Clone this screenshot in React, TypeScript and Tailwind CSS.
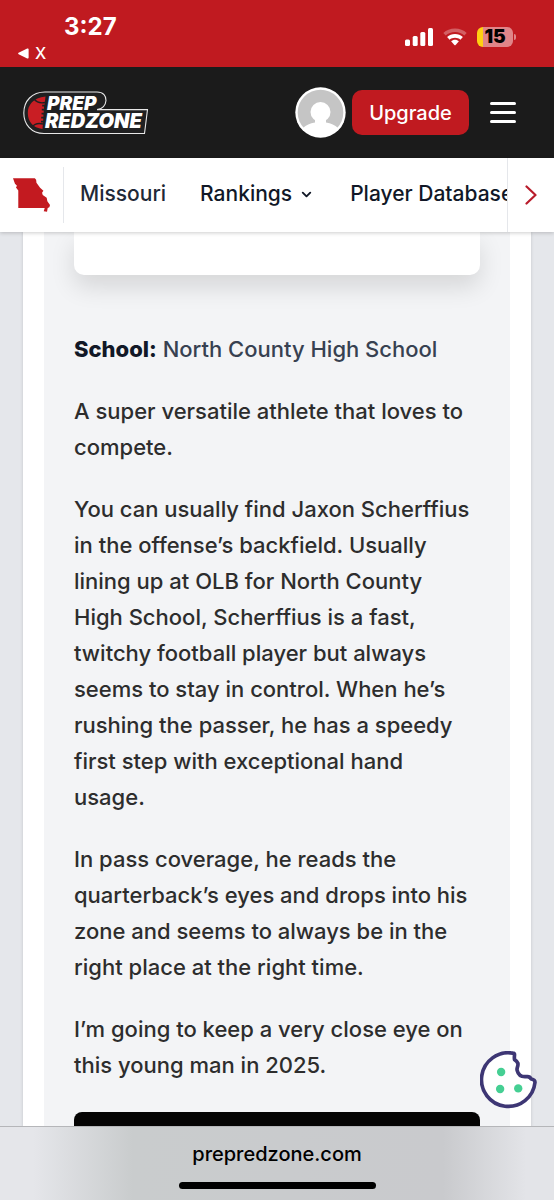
import React from 'react';
import { ChevronDown } from 'lucide-react';

const PARAGRAPHS = [
	'A super versatile athlete that loves to compete.',
	'You can usually find Jaxon Scherffius in the offense’s backfield. Usually lining up at OLB for North County High School, Scherffius is a fast, twitchy football player but always seems to stay in control. When he’s rushing the passer, he has a speedy first step with exceptional hand usage.',
	'In pass coverage, he reads the quarterback’s eyes and drops into his zone and seems to always be in the right place at the right time.',
	'I’m going to keep a very close eye on this young man in 2025.',
];

const SignalIcon = () => (
	<svg width="28" height="18" viewBox="0 0 28 18" fill="#fff" aria-hidden="true">
		<rect x="0" y="11.5" width="5" height="6.5" rx="1.5" />
		<rect x="7.7" y="8" width="5" height="10" rx="1.5" />
		<rect x="15.3" y="4" width="5" height="14" rx="1.5" />
		<rect x="23" y="0" width="5" height="18" rx="1.5" />
	</svg>
);

const WifiIcon = () => (
	<svg width="24" height="18" viewBox="0 0 24 18" aria-hidden="true">
		<path
			d="M12 0.5C16.6 0.5 20.7 2.2 23.7 5L21.3 7.5C18.9 5.3 15.6 4 12 4S5.1 5.3 2.7 7.5L.3 5C3.3 2.2 7.4.5 12 .5Z"
			fill="#fff"
			fillOpacity="0.3"
		/>
		<path
			d="M12 6C15 6 17.8 7.1 19.9 9L17.4 11.7C16 10.5 14.1 9.8 12 9.8S8 10.5 6.6 11.7L4.1 9C6.2 7.1 9 6 12 6Z"
			fill="#fff"
		/>
		<path
			d="M12 11.8C13.5 11.8 14.9 12.4 15.9 13.3L12.6 16.9Q12 17.5 11.4 16.9L8.1 13.3C9.1 12.4 10.5 11.8 12 11.8Z"
			fill="#fff"
		/>
	</svg>
);

const StatusBar = () => (
	<div className="flex h-[67px] shrink-0 items-start justify-between bg-[#c01a20] text-white">
		<div className="flex flex-col pl-[18px] pt-[13px]">
			<span className="pl-[46px] text-[24px] leading-7 font-bold">3:27</span>
			<span className="flex items-center gap-[6px] pt-[2px] text-[16px] leading-5 font-medium">
				<svg width="11" height="11" viewBox="0 0 11 11" fill="#fff" aria-hidden="true">
					<path d="M.6 4.8 9.2.6Q10.6 0 10.6 1.4V9.6Q10.6 11 9.2 10.4L.6 6.2Q-.4 5.5.6 4.8Z" />
				</svg>
				X
			</span>
		</div>
		<div className="flex items-center pr-[38px] pt-[27px]">
			<SignalIcon />
			<span className="px-[10px]">
				<WifiIcon />
			</span>
			<span className="flex h-5 w-9 items-center justify-center rounded-[6px] bg-linear-to-r from-[#ffd012] from-17% to-[#e08588] to-17% text-[19px] leading-5 font-black text-black">
				15
			</span>
			<span className="ml-px h-[6px] w-[2px] rounded-r-full bg-[#e08588]" />
		</div>
	</div>
);

const Logo = () => (
	<svg width="126" height="44" viewBox="0 0 126 44" role="img" aria-label="Prep Redzone">
		<path
			d="M22 1H74C87 1 85 18 74 18.6H124.5L121.5 42.5H21C8 42.5 .8 33 .8 22C.8 10 9 1 22 1Z"
			fill="#202021"
			stroke="#e8e8e8"
			strokeWidth="1.1"
		/>
		<path
			d="M22.5 5.5C10 7 4.8 14 4.8 22C4.8 30.5 10 37 19.5 38L20 31.5H18V29.8H20.2V27.5H18.2V25.8H20.4V23.5H18.5V21.8H20.7V19.5H18.8V17.8H21V15.5H19.2V13.8H21.5Z"
			fill="#c91e24"
		/>
		<path d="M11 8Q15 13 22 11.5M9 36Q13 31 20 33" fill="none" stroke="#202021" strokeWidth="1.4" />
		<g fill="#fff" fontFamily="Inter, sans-serif" fontStyle="italic" fontWeight="900">
			<text x="24" y="19" fontSize="19">PREP</text>
			<text x="22" y="37" fontSize="20">REDZONE</text>
		</g>
	</svg>
);

const Header = () => (
	<header className="flex h-[91px] shrink-0 items-center justify-between bg-[#1b1b1b] pl-[23px] pr-[38px]">
		<a href="#">
			<Logo />
		</a>
		<div className="flex items-center">
			<button type="button" aria-label="Account" className="mr-[6px]">
				<svg width="51" height="51" viewBox="0 0 51 51" aria-hidden="true">
					<circle cx="25.5" cy="25.5" r="25.2" fill="#fff" />
					<circle cx="25.5" cy="25.5" r="22.8" fill="#c5c5c5" />
					<circle cx="25.5" cy="25" r="10" fill="#fff" />
					<path d="M20 31V35.5C15 36.5 11 38 8 41L14 47Q25.5 53 37 47L43 41C40 38 36 36.5 31 35.5V31Z" fill="#fff" />
				</svg>
			</button>
			<button type="button" className="mr-[21px] h-[45px] w-[117px] rounded-[10px] bg-[#c01a20] text-[20px] font-medium text-white">
				Upgrade
			</button>
			<button type="button" aria-label="Menu" className="flex flex-col gap-[6px]">
				<span className="h-[3px] w-[26px] rounded-full bg-white" />
				<span className="h-[3px] w-[26px] rounded-full bg-white" />
				<span className="h-[3px] w-[26px] rounded-full bg-white" />
			</button>
		</div>
	</header>
);

const MissouriIcon = () => (
	<svg width="37" height="34" viewBox="0 0 112 102" fill="#c31a20" aria-hidden="true">
		<path d="M0 0H66L70 5L71 14L82 29L92 38L88 44L90 51L102 59L104 70L112 81L110 88L105 90L103 102L93 100L96 90H16V37L9 28L12 23L6 17Z" />
	</svg>
);

const NavBar = () => (
	<nav className="relative z-10 flex h-[74px] shrink-0 items-center bg-white text-[21px] font-medium text-[#111827] shadow-[0_1px_4px_rgba(0,0,0,0.2)]">
		<a href="#" aria-label="State" className="flex h-14 shrink-0 items-center border-r border-gray-200 px-[13px]">
			<MissouriIcon />
		</a>
		<div className="flex min-w-0 flex-1 items-center overflow-hidden pb-[2px] pl-4 whitespace-nowrap">
			<a href="#" className="mr-[34px] text-[#1f2937]">Missouri</a>
			<button type="button" className="mr-[36px] flex items-center gap-[7px]">
				Rankings
				<ChevronDown size={15} strokeWidth={3} />
			</button>
			<a href="#">Player Database</a>
		</div>
		<button type="button" aria-label="Scroll right" className="flex h-full w-[47px] shrink-0 items-center justify-center border-l border-gray-200 bg-white">
			<svg width="12" height="20" viewBox="0 0 12 20" fill="none" stroke="#b91c2b" strokeWidth="2.2" strokeLinecap="round" strokeLinejoin="round" aria-hidden="true">
				<path d="M1.5 1.5 10.5 10 1.5 18.5" />
			</svg>
		</button>
	</nav>
);

const Article = () => (
	<main className="min-h-0 flex-1 overflow-hidden px-[23px]">
		<article className="bg-white px-[21px] shadow-[0_0_3px_rgba(0,0,0,0.15)]">
			<div className="bg-[#f3f4f6] px-[30px] text-[22px] leading-9 font-medium text-[#2d2d2d]">
				{/* bottom edge of the player card */}
				<div className="h-[43px] rounded-b-[10px] bg-white shadow-[0_12px_24px_rgba(0,0,0,0.12)]" />
				<div className="flex flex-col gap-[26px] pt-14 pr-2 pb-[29px]">
					<p className="text-[#374151]">
						<strong className="font-extrabold text-[#111827]">School:</strong> North County High School
					</p>
					{PARAGRAPHS.map((text) => (
						<p key={text}>{text}</p>
					))}
				</div>
				<div className="h-56 rounded-[8px] bg-[#050404]" />
			</div>
		</article>
	</main>
);

const CookieButton = () => (
	<button type="button" aria-label="Cookie settings" className="fixed right-[17px] bottom-[91px] z-20">
		<svg width="57" height="58" viewBox="0 0 170 172" aria-hidden="true">
			<path
				d="M98 6A80 80 0 1 0 164 93Q164 85 153 83Q148 74 138 76Q116 78 111 58C108 50 115 46 113 36Q110 29 103 25Q102 20 103 11Q103 6 98 6Z"
				fill="#fff"
				stroke="#3d3674"
				strokeWidth="11"
				strokeLinejoin="round"
			/>
			<g fill="#45cf93">
				<circle cx="63" cy="62" r="12.5" />
				<circle cx="60" cy="113" r="12.5" />
				<circle cx="114" cy="111" r="12.5" />
			</g>
		</svg>
	</button>
);

const BrowserBar = () => (
	<footer className="relative z-10 flex h-[74px] shrink-0 flex-col items-center justify-between border-t border-[#b5b6b9] bg-[linear-gradient(to_right,#e5e6ea_6%,#c9cccd_24%,#c9cacd_80%,#e3e4e8_95%)] pt-[13px] pb-[11px]">
		<span className="text-[20px] leading-7 font-medium text-black">prepredzone.com</span>
		<span className="h-[7px] w-[197px] rounded-full bg-black" />
	</footer>
);

const App = () => {
	return (
		<div className="flex h-screen flex-col overflow-hidden bg-[#e5e7eb] font-['Inter',sans-serif]">
			<StatusBar />
			<Header />
			<NavBar />
			<Article />
			<CookieButton />
			<BrowserBar />
		</div>
	);
};

export default App;
